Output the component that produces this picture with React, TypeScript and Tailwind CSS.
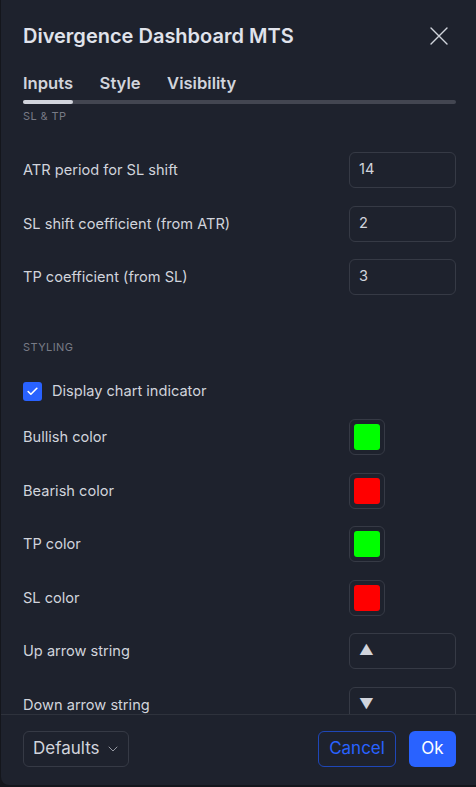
import { Check, ChevronDown } from 'lucide-react';

const font = { fontFamily: 'Inter, "Noto Sans", "DejaVu Sans", sans-serif' };

function SectionLabel({ children, className }: { children: string; className?: string }) {
  return (
    <div className={`text-[11px] leading-4 tracking-[0.4px] text-[#787b86] uppercase ${className ?? ''}`}>
      {children}
    </div>
  );
}

function InputRow({ label, value }: { label: string; value: string }) {
  return (
    <div className="flex h-[36px] items-center justify-between">
      <span className="pt-[2px] text-[14.6px] text-[#d1d4dc]">{label}</span>
      <div className="flex h-[36px] w-[107px] items-center rounded-md border border-[#363a45] px-[9px] text-[14.6px] text-[#d1d4dc]">
        {value}
      </div>
    </div>
  );
}

function ColorRow({ label, color }: { label: string; color: string }) {
  return (
    <div className="flex h-[36px] items-center justify-between">
      <span className="pt-[2px] text-[14.6px] text-[#d1d4dc]">{label}</span>
      <div className="mr-[71px] flex h-[36px] w-[36px] items-center justify-center rounded-md border border-[#363a45]">
        <div className={`h-[26px] w-[26px] rounded-[3px] ${color}`} />
      </div>
    </div>
  );
}

export default function App() {
  return (
    <div className="h-[787px] w-[476px] bg-[#14161c] pb-[2px] pl-px" style={font}>
      <div className="flex h-full flex-col overflow-hidden rounded-bl-lg bg-[#1e222d]">
        {/* header */}
        <div className="pt-[22px] pr-[20px] pl-[22px]">
          <div className="flex items-center justify-between">
            <h1 className="text-[20px] leading-7 font-semibold text-[#e0e3eb]">Divergence Dashboard MTS</h1>
            <svg width="18" height="18" viewBox="0 0 18 18" className="mr-[8px] text-[#d1d4dc]" aria-hidden="true">
              <path d="M1 1 17 17M17 1 1 17" stroke="currentColor" strokeWidth="1.4" strokeLinecap="round" />
            </svg>
          </div>
          <div className="mt-[21px] flex gap-[26.5px] text-[16.6px] leading-6 font-semibold text-[#d1d4dc]">
            <span>Inputs</span>
            <span>Style</span>
            <span>Visibility</span>
          </div>
          <div className="mt-[5px] h-[4px] rounded-full bg-[#434651]">
            <div className="h-full w-[50px] rounded-full bg-[#d1d4dc]" />
          </div>
        </div>

        {/* scroll content */}
        <div className="flex-1 overflow-hidden pt-[4px] pr-[20px] pl-[22px]">
          <SectionLabel>SL &amp; TP</SectionLabel>
          <div className="mt-[28px] flex flex-col gap-[17.5px]">
            <InputRow label="ATR period for SL shift" value="14" />
            <InputRow label="SL shift coefficient (from ATR)" value="2" />
            <InputRow label="TP coefficient (from SL)" value="3" />
          </div>
          <SectionLabel className="mt-[44px]">Styling</SectionLabel>
          <div className="mt-[18px] flex h-[36px] items-center gap-[10px]">
            <div className="flex h-[19px] w-[19px] items-center justify-center rounded-[3px] bg-[#2962ff]">
              <Check className="h-[13px] w-[13px] text-white" strokeWidth={3} />
            </div>
            <span className="pt-[2px] text-[14.6px] text-[#d1d4dc]">Display chart indicator</span>
          </div>
          <div className="mt-[10px] flex flex-col gap-[17.5px]">
            <ColorRow label="Bullish color" color="bg-[#00ff00]" />
            <ColorRow label="Bearish color" color="bg-[#ff0000]" />
            <ColorRow label="TP color" color="bg-[#00ff00]" />
            <ColorRow label="SL color" color="bg-[#ff0000]" />
            <InputRow label="Up arrow string" value="▲" />
            <InputRow label="Down arrow string" value="▼" />
          </div>
        </div>

        {/* footer */}
        <div className="flex items-center justify-between border-t border-[#2e323c] pt-[16px] pr-[20px] pb-[18px] pl-[22px]">
          <div className="flex h-[36px] w-[106px] items-center justify-between rounded-md border border-[#363a45] pr-[7px] pl-[9px] text-[17px] text-[#d1d4dc]">
            <span>Defaults</span>
            <ChevronDown className="h-[16px] w-[16px] text-[#9598a1]" strokeWidth={1.5} />
          </div>
          <div className="flex gap-[13px]">
            <button className="h-[36px] w-[78px] rounded-md border border-[#1f47b8] text-[17px] text-[#2962ff]">
              Cancel
            </button>
            <button className="h-[36px] w-[47px] rounded-md bg-[#2962ff] text-[17px] text-white">Ok</button>
          </div>
        </div>
      </div>
    </div>
  );
}
